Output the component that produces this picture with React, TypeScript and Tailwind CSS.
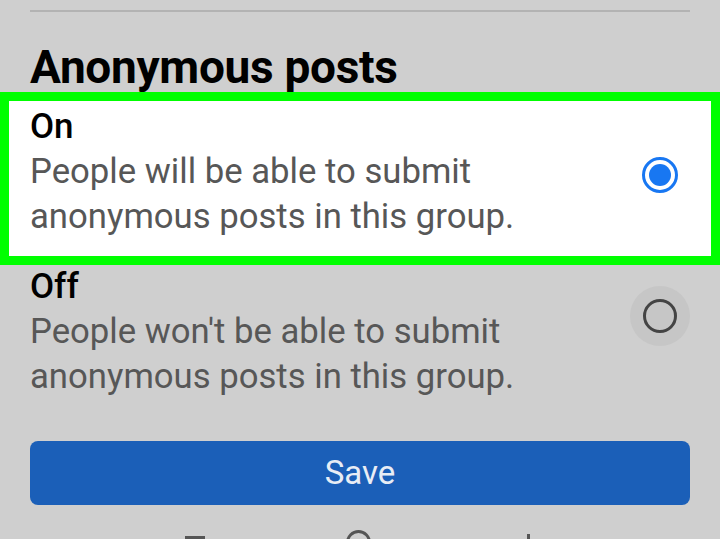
import React from "react";

export default function App() {
  return (
    <div className="w-[720px] h-[539px] overflow-hidden bg-[#cfcfcf]" style={{ fontFamily: "Roboto, 'Liberation Sans', sans-serif" }}>
      <div className="px-[30px] pt-[10px]">
        <div className="h-[2px] bg-[#b3b3b3]" />
      </div>
      <div className="px-[30px] pt-[32px] pb-[2px]">
        <h1 className="text-[46px] leading-[46px] font-bold text-black tracking-[-0.3px]">Anonymous posts</h1>
      </div>
      <div className="border-[9px] border-[#00ff00] bg-white flex items-start justify-between pl-[21px] pr-[33px] h-[173px]">
        <div className="flex flex-col pt-[4px]">
          <div className="text-[35px] leading-[44px] font-medium text-black">On</div>
          <div className="text-[34.7px] leading-[45px] text-[#575757]">
            People will be able to submit
            <br />
            anonymous posts in this group.
          </div>
        </div>
        <div className="mt-[56px] w-[36px] h-[36px] rounded-full border-[3px] border-[#1877f2] flex items-center justify-center">
          <div className="w-[22px] h-[22px] rounded-full bg-[#1877f2]" />
        </div>
      </div>
      <div className="flex items-start justify-between pl-[30px] pr-[30px]">
        <div className="flex flex-col">
          <div className="text-[35px] leading-[44px] font-medium text-black">Off</div>
          <div className="text-[34.7px] leading-[45px] text-[#575757]">
            People won't be able to submit
            <br />
            anonymous posts in this group.
          </div>
        </div>
        <div className="mt-[21px] w-[60px] h-[60px] rounded-full bg-[#c6c6c6] flex items-center justify-center">
          <div className="w-[34px] h-[34px] rounded-full border-[3px] border-[#444444]" />
        </div>
      </div>
      <div className="px-[30px] pt-[42px]">
        <div className="h-[64px] rounded-[8px] bg-[#1b5fb8] flex items-center justify-center text-[33px] text-[#e8edf5]">Save</div>
      </div>
      <div className="flex items-start pl-[185px]">
        <div className="mt-[31px] w-[20px] h-[10px] bg-[#555]" />
        <div className="ml-[141px] mt-[25px] w-[25px] h-[25px] rounded-full border-[3px] border-[#555]" />
        <div className="ml-[156px] mt-[29px] w-[3px] h-[10px] bg-[#555]" />
      </div>
    </div>
  );
}
